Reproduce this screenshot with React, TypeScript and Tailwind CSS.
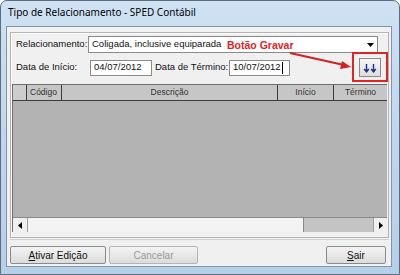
import React from "react";

const UI = { fontFamily: '"Liberation Sans", Tahoma, Arial, sans-serif' };

function Tri({ dir }: { dir: "down" | "left" | "right" }) {
  if (dir === "down")
    return (
      <svg width="7" height="4" viewBox="0 0 7 4">
        <path d="M0 0H7L3.5 4Z" fill="#000" />
      </svg>
    );
  if (dir === "left")
    return (
      <svg width="4" height="7" viewBox="0 0 4 7">
        <path d="M4 0V7L0 3.5Z" fill="#000" />
      </svg>
    );
  return (
    <svg width="4" height="7" viewBox="0 0 4 7">
      <path d="M0 0V7L4 3.5Z" fill="#000" />
    </svg>
  );
}

function Btn({ children, w, disabled }: { children: React.ReactNode; w: string; disabled?: boolean }) {
  return (
    <div
      className={`${w} h-[18px] flex items-center justify-center rounded-[2px] border bg-gradient-to-b from-[#f4f4f4] to-[#dcdcdc] text-[10px] whitespace-nowrap ${disabled ? "text-[#9a9a9a] border-[#b5b5b5]" : "text-[#111] border-[#8a8a8a]"}`}
    >
      {children}
    </div>
  );
}

export default function App() {
  return (
    <div className="w-[400px] h-[275px] bg-white overflow-hidden relative" style={UI}>
      <div className="w-[400px] h-[275px] rounded-t-[7px] border border-[#5d6d80] bg-gradient-to-b from-[#cfe1f3] via-[#c0d6ee] to-[#b6cfe9] flex flex-col">
        {/* title bar */}
        <div
          className="h-[25px] flex items-center pl-[7px] pb-[3px] text-[10px] text-black whitespace-nowrap"
          style={{ fontFamily: '"Noto Sans", "Open Sans", sans-serif' }}
        >
          Tipo de Relacionamento - SPED Contábil
        </div>
        {/* client */}
        <div className="ml-[5px] w-[386px] h-[241px] border border-[#8194aa] bg-[#f0f0f0] flex flex-col pl-[3px] pt-[5px]">
          {/* panel */}
          <div className="w-[379px] h-[206px] border border-[#b4b4b4] shadow-[inset_1px_1px_0_#fff] flex flex-col pt-[3px] text-[9.5px] text-[#111] whitespace-nowrap">
            {/* row 1 */}
            <div className="h-[17px] flex items-center pl-[5px]">
              <div className="w-[72px]">Relacionamento:</div>
              <div className="w-[290px] h-[17px] border border-[#8a8a8a] bg-white flex items-center pl-[3px]">
                <span className="flex-1">Coligada, inclusive equiparada</span>
                <div className="w-[14px] flex justify-center">
                  <Tri dir="down" />
                </div>
              </div>
            </div>
            {/* row 2 */}
            <div className="mt-[5px] h-[19px] flex items-center pl-[5px]">
              <div className="w-[74px]">Data de Início:</div>
              <div className="w-[62px] h-[16px] border border-[#8a8a8a] bg-white flex items-center pl-[3px]">04/07/2012</div>
              <div className="ml-[3px] w-[74px]">Data de Término:</div>
              <div className="w-[61px] h-[16px] border border-[#8a8a8a] bg-white flex items-center pl-[3px]">
                <span>10/07/2012</span>
                <span className="ml-[1px] w-[1px] h-[12px] bg-black" />
              </div>
              <div className="ml-auto mr-[7px] w-[22px] h-[19px] border border-[#8a8a8a] bg-gradient-to-b from-[#f6f6f6] to-[#dedede] flex items-center justify-center">
                <svg width="14" height="10" viewBox="0 0 14 10">
                  <path d="M3.5 1V8.5M1.2 6L3.5 8.8L5.8 6" stroke="#1a2f8a" strokeWidth="1.4" fill="none" />
                  <path d="M10.5 1V8.5M8.2 6L10.5 8.8L12.8 6" stroke="#1a2f8a" strokeWidth="1.4" fill="none" />
                </svg>
              </div>
            </div>
            {/* grid */}
            <div className="mt-[7px] ml-[1px] w-[375px] h-[148px] border-l border-t border-[#6e6e6e] bg-[#b3b3b3] flex flex-col">
              <div className="h-[16px] flex border-b border-[#3c3c3c] bg-[#c6c6c6] text-[8.5px] text-[#333]">
                <div className="w-[14px] border-r border-[#3c3c3c] bg-[#cdcdcd]" />
                <div className="w-[35px] border-r border-[#3c3c3c] flex items-center pl-[3px]">Código</div>
                <div className="w-[216px] border-r border-[#3c3c3c] flex items-center justify-center">Descrição</div>
                <div className="w-[56px] border-r border-[#3c3c3c] flex items-center justify-center">Início</div>
                <div className="flex-1 flex items-center justify-center">Término</div>
              </div>
              <div className="flex-1" />
              <div className="h-[15px] flex border-t border-[#8a8a8a]">
                <div className="w-[15px] bg-[#f0f0f0] border-r border-[#a0a0a0] flex items-center justify-center">
                  <Tri dir="left" />
                </div>
                <div className="w-[276px] bg-[#f3f3f3] border-r border-[#8a8a8a]" />
                <div className="flex-1 bg-[#c4c4c4]" />
                <div className="w-[14px] bg-[#f0f0f0] border-l border-[#a0a0a0] flex items-center justify-center">
                  <Tri dir="right" />
                </div>
              </div>
            </div>
          </div>
          {/* separator */}
          <div className="mt-[1px] w-[379px] h-[1px] bg-[#d0d0d0]" />
          {/* buttons */}
          <div className="mt-[6px] flex text-[10px]">
            <Btn w="w-[96px]">
              <span>
                <span className="underline">A</span>tivar Edição
              </span>
            </Btn>
            <div className="ml-[3px]">
              <Btn w="w-[89px]" disabled>
                Cancelar
              </Btn>
            </div>
            <div className="ml-[128px]">
              <Btn w="w-[60px]">
                <span>
                  <span className="underline">S</span>air
                </span>
              </Btn>
            </div>
          </div>
        </div>
      </div>
      {/* annotation overlay */}
      <div className="absolute left-[227px] top-[38px] text-[10.5px] font-bold text-[#e02424] whitespace-nowrap" style={UI}>
        Botão Gravar
      </div>
      <div className="absolute left-[352px] top-[52px] w-[36px] h-[30px] border-[2px] border-[#e02424]" />
      <svg className="absolute left-0 top-0" width="400" height="275" viewBox="0 0 400 275">
        <path d="M290 53L344 65" stroke="#d42020" strokeWidth="2" fill="none" />
        <path d="M351 67L342 61L340 69Z" fill="#d42020" />
      </svg>
    </div>
  );
}
